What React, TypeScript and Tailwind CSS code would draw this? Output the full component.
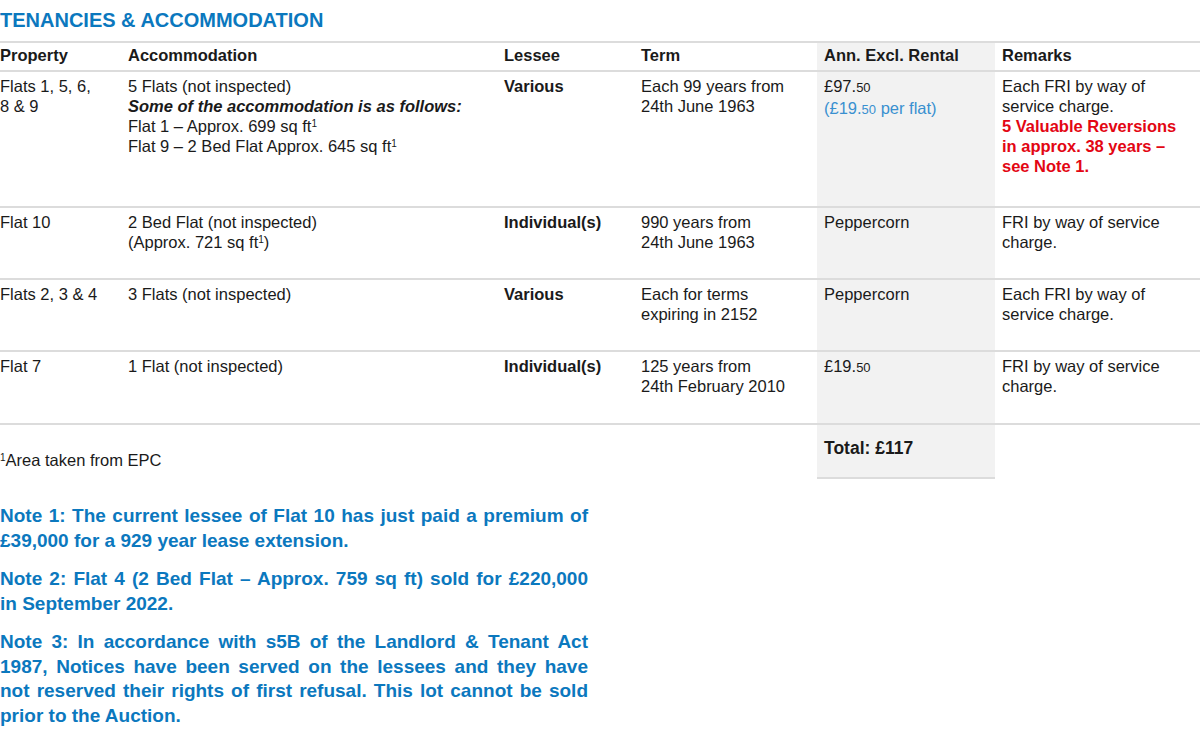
import React from "react";

const font = { fontFamily: '"Liberation Sans", Arial, sans-serif' };

function Sup() {
  return <span className="text-[10px] align-[5px] leading-none">1</span>;
}

function Row({
  h,
  cells,
}: {
  h: string;
  cells: React.ReactNode[];
}) {
  return (
    <div className={`grid grid-cols-[128px_376px_137px_176px_178px_205px] border-b-2 border-[#dcdcdc] ${h}`}>
      <div className="pt-[4px]">{cells[0]}</div>
      <div className="pt-[4px]">{cells[1]}</div>
      <div className="pt-[4px]">{cells[2]}</div>
      <div className="pt-[4px]">{cells[3]}</div>
      <div className="pt-[4px] pl-[7px] bg-[#f2f2f2]">{cells[4]}</div>
      <div className="pt-[4px] pl-[7px]">{cells[5]}</div>
    </div>
  );
}

function JLine({ children, last }: { children: React.ReactNode; last?: boolean }) {
  return (
    <div className={last ? "text-left whitespace-nowrap" : "whitespace-nowrap text-justify [text-align-last:justify]"}>{children}</div>
  );
}

export default function App() {
  return (
    <div className="w-[1200px] h-[731px] bg-white text-[#1a1a1a] overflow-hidden" style={font}>
      <div className="h-[41px] pt-[7px] text-[20px] leading-[26px] font-bold text-[#0b78be]">
        TENANCIES &amp; ACCOMMODATION
      </div>
      <div className="border-t-2 border-[#dcdcdc] text-[16.5px] leading-[20px]">
        <div className="grid grid-cols-[128px_376px_137px_176px_178px_205px] border-b-2 border-[#dcdcdc] h-[29px] font-bold text-[16.5px]">
          <div className="pt-[2px]">Property</div>
          <div className="pt-[2px]">Accommodation</div>
          <div className="pt-[2px]">Lessee</div>
          <div className="pt-[2px]">Term</div>
          <div className="pt-[2px] pl-[7px] bg-[#f2f2f2]">Ann. Excl. Rental</div>
          <div className="pt-[2px] pl-[7px]">Remarks</div>
        </div>
        <Row
          h="h-[136px]"
          cells={[
            <>Flats 1, 5, 6,<br />8 &amp; 9</>,
            <>
              5 Flats (not inspected)
              <br />
              <span className="font-bold italic">Some of the accommodation is as follows:</span>
              <br />
              Flat 1 – Approx. 699 sq ft<Sup />
              <br />
              Flat 9 – 2 Bed Flat Approx. 645 sq ft<Sup />
            </>,
            <span className="font-bold">Various</span>,
            <>Each 99 years from<br />24th June 1963</>,
            <>
              £97.<span className="text-[13px]">50</span>
              <br />
              <span className="text-[#3990d0]">(£19.<span className="text-[13px]">50</span> per flat)</span>
            </>,
            <>
              Each FRI by way of
              <br />
              service charge.
              <br />
              <span className="font-bold text-[#e30613]">
                5 Valuable Reversions
                <br />
                in approx. 38 years –
                <br />
                see Note 1.
              </span>
            </>,
          ]}
        />
        <Row
          h="h-[72px]"
          cells={[
            <>Flat 10</>,
            <>2 Bed Flat (not inspected)<br />(Approx. 721 sq ft<Sup />)</>,
            <span className="font-bold">Individual(s)</span>,
            <>990 years from<br />24th June 1963</>,
            <>Peppercorn</>,
            <>FRI by way of service<br />charge.</>,
          ]}
        />
        <Row
          h="h-[72px]"
          cells={[
            <>Flats 2, 3 &amp; 4</>,
            <>3 Flats (not inspected)</>,
            <span className="font-bold">Various</span>,
            <>Each for terms<br />expiring in 2152</>,
            <>Peppercorn</>,
            <>Each FRI by way of<br />service charge.</>,
          ]}
        />
        <Row
          h="h-[73px]"
          cells={[
            <>Flat 7</>,
            <>1 Flat (not inspected)</>,
            <span className="font-bold">Individual(s)</span>,
            <>125 years from<br />24th February 2010</>,
            <>£19.<span className="text-[13px]">50</span></>,
            <>FRI by way of service<br />charge.</>,
          ]}
        />
        <div className="grid grid-cols-[817px_178px_205px] h-[54px]">
          <div className="pt-[25px]">
            <Sup />Area taken from EPC
          </div>
          <div className="bg-[#f2f2f2] border-b-2 border-[#dcdcdc] pl-[7px] pt-[13px] font-bold text-[17.5px]">
            Total: £117
          </div>
          <div />
        </div>
      </div>
      <div className="w-[588px] mt-[25px] text-[19px] leading-[24.5px] font-bold text-[#0b78be] flex flex-col gap-[14px]">
        <div>
          <JLine>Note 1: The current lessee of Flat 10 has just paid a premium of</JLine>
          <JLine last>£39,000 for a 929 year lease extension.</JLine>
        </div>
        <div>
          <JLine>Note 2: Flat 4 (2 Bed Flat – Approx. 759 sq ft) sold for £220,000</JLine>
          <JLine last>in September 2022.</JLine>
        </div>
        <div>
          <JLine>Note 3: In accordance with s5B of the Landlord &amp; Tenant Act</JLine>
          <JLine>1987, Notices have been served on the lessees and they have</JLine>
          <JLine>not reserved their rights of first refusal. This lot cannot be sold</JLine>
          <JLine last>prior to the Auction.</JLine>
        </div>
      </div>
    </div>
  );
}
